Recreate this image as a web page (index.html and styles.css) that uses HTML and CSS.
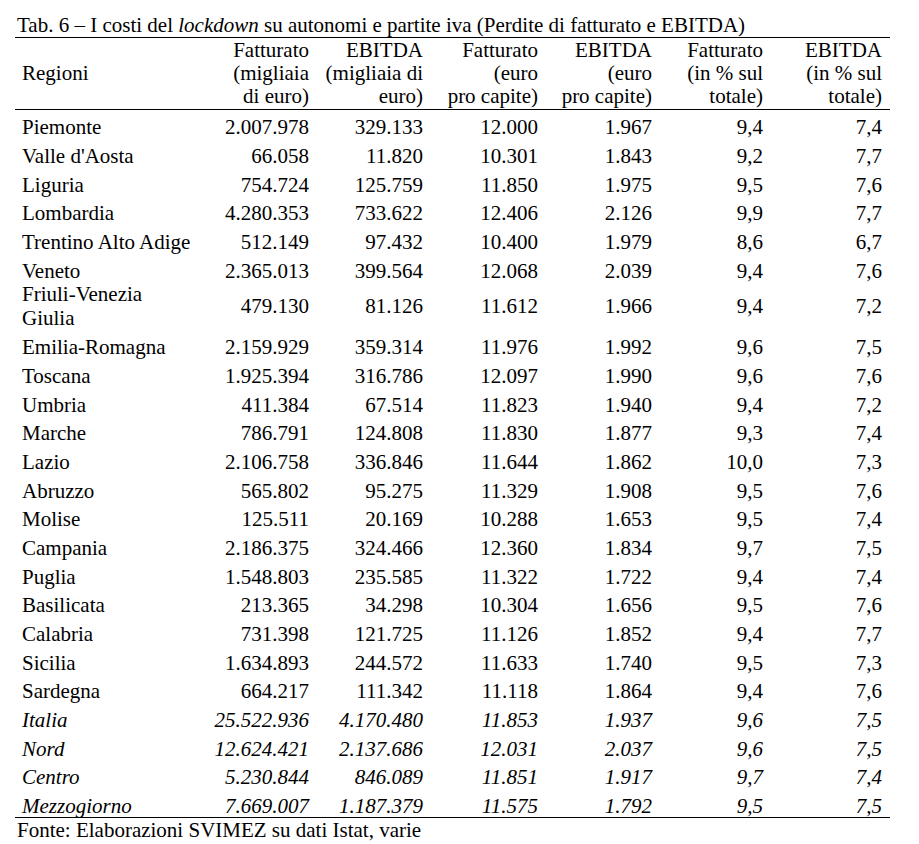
FILE: index.html
```html
<!DOCTYPE html>
<html lang="it">
<head>
<meta charset="utf-8">
<title>Tab. 6</title>
<link rel="stylesheet" href="styles.css">
</head>
<body>
<div class="page">
  <p class="caption">Tab. 6 – I costi del <i>lockdown</i> su autonomi e partite iva (Perdite di fatturato e EBITDA)</p>
  <table class="data">
    <colgroup>
      <col class="c-reg"><col class="c1"><col class="c2"><col class="c3"><col class="c4"><col class="c5"><col class="c6">
    </colgroup>
    <thead>
      <tr>
        <th class="reg">Regioni</th>
        <th>Fatturato<br>(migliaia<br>di euro)</th>
        <th>EBITDA<br>(migliaia di<br>euro)</th>
        <th>Fatturato<br>(euro<br>pro capite)</th>
        <th>EBITDA<br>(euro<br>pro capite)</th>
        <th>Fatturato<br>(in % sul<br>totale)</th>
        <th>EBITDA<br>(in % sul<br>totale)</th>
      </tr>
    </thead>
    <tbody>
      <tr><td>Piemonte</td><td>2.007.978</td><td>329.133</td><td>12.000</td><td>1.967</td><td>9,4</td><td>7,4</td></tr>
      <tr><td>Valle d'Aosta</td><td>66.058</td><td>11.820</td><td>10.301</td><td>1.843</td><td>9,2</td><td>7,7</td></tr>
      <tr><td>Liguria</td><td>754.724</td><td>125.759</td><td>11.850</td><td>1.975</td><td>9,5</td><td>7,6</td></tr>
      <tr><td>Lombardia</td><td>4.280.353</td><td>733.622</td><td>12.406</td><td>2.126</td><td>9,9</td><td>7,7</td></tr>
      <tr><td>Trentino Alto Adige</td><td>512.149</td><td>97.432</td><td>10.400</td><td>1.979</td><td>8,6</td><td>6,7</td></tr>
      <tr><td>Veneto</td><td>2.365.013</td><td>399.564</td><td>12.068</td><td>2.039</td><td>9,4</td><td>7,6</td></tr>
      <tr class="two"><td>Friuli-Venezia<br>Giulia</td><td>479.130</td><td>81.126</td><td>11.612</td><td>1.966</td><td>9,4</td><td>7,2</td></tr>
      <tr><td>Emilia-Romagna</td><td>2.159.929</td><td>359.314</td><td>11.976</td><td>1.992</td><td>9,6</td><td>7,5</td></tr>
      <tr><td>Toscana</td><td>1.925.394</td><td>316.786</td><td>12.097</td><td>1.990</td><td>9,6</td><td>7,6</td></tr>
      <tr><td>Umbria</td><td>411.384</td><td>67.514</td><td>11.823</td><td>1.940</td><td>9,4</td><td>7,2</td></tr>
      <tr><td>Marche</td><td>786.791</td><td>124.808</td><td>11.830</td><td>1.877</td><td>9,3</td><td>7,4</td></tr>
      <tr><td>Lazio</td><td>2.106.758</td><td>336.846</td><td>11.644</td><td>1.862</td><td>10,0</td><td>7,3</td></tr>
      <tr><td>Abruzzo</td><td>565.802</td><td>95.275</td><td>11.329</td><td>1.908</td><td>9,5</td><td>7,6</td></tr>
      <tr><td>Molise</td><td>125.511</td><td>20.169</td><td>10.288</td><td>1.653</td><td>9,5</td><td>7,4</td></tr>
      <tr><td>Campania</td><td>2.186.375</td><td>324.466</td><td>12.360</td><td>1.834</td><td>9,7</td><td>7,5</td></tr>
      <tr><td>Puglia</td><td>1.548.803</td><td>235.585</td><td>11.322</td><td>1.722</td><td>9,4</td><td>7,4</td></tr>
      <tr><td>Basilicata</td><td>213.365</td><td>34.298</td><td>10.304</td><td>1.656</td><td>9,5</td><td>7,6</td></tr>
      <tr><td>Calabria</td><td>731.398</td><td>121.725</td><td>11.126</td><td>1.852</td><td>9,4</td><td>7,7</td></tr>
      <tr><td>Sicilia</td><td>1.634.893</td><td>244.572</td><td>11.633</td><td>1.740</td><td>9,5</td><td>7,3</td></tr>
      <tr><td>Sardegna</td><td>664.217</td><td>111.342</td><td>11.118</td><td>1.864</td><td>9,4</td><td>7,6</td></tr>
      <tr class="tot"><td>Italia</td><td>25.522.936</td><td>4.170.480</td><td>11.853</td><td>1.937</td><td>9,6</td><td>7,5</td></tr>
      <tr class="tot"><td>Nord</td><td>12.624.421</td><td>2.137.686</td><td>12.031</td><td>2.037</td><td>9,6</td><td>7,5</td></tr>
      <tr class="tot"><td>Centro</td><td>5.230.844</td><td>846.089</td><td>11.851</td><td>1.917</td><td>9,7</td><td>7,4</td></tr>
      <tr class="tot last"><td>Mezzogiorno</td><td>7.669.007</td><td>1.187.379</td><td>11.575</td><td>1.792</td><td>9,5</td><td>7,5</td></tr>
    </tbody>
  </table>
  <p class="source">Fonte: Elaborazioni SVIMEZ su dati Istat, varie</p>
</div>
</body>
</html>
```

FILE: styles.css
```css
html, body {
  margin: 0;
  padding: 0;
  background: #ffffff;
}

body {
  font-family: "Liberation Serif", "Times New Roman", serif;
  font-size: 21px;
  color: #000;
}

.page {
  padding: 13px 0 0 15px;
}

.caption {
  margin: 0;
  padding-left: 2px;
  line-height: 24px;
  height: 24px;
  white-space: nowrap;
}

.data {
  border-collapse: collapse;
  table-layout: fixed;
  width: 875px;
  border-top: 1.5px solid #000;
  border-bottom: 1.5px solid #000;
}

.c-reg { width: 193px; }
.c1 { width: 109px; }
.c2 { width: 114px; }
.c3 { width: 115px; }
.c4 { width: 114px; }
.c5 { width: 111px; }
.c6 { width: 119px; }

.data th {
  font-weight: normal;
  text-align: right;
  line-height: 23.4px;
  padding: 0.5px 8px 0.5px 0;
  vertical-align: middle;
  white-space: nowrap;
  border-bottom: 1.5px solid #000;
}

.data th.reg {
  text-align: left;
  padding-left: 7px;
}

.data td {
  text-align: right;
  line-height: 22px;
  height: 22px;
  padding: 6.17px 8px 0.5px 0;
  white-space: nowrap;
  vertical-align: middle;
}

.data td:first-child {
  text-align: left;
  padding-left: 7px;
}

.data tr.two td {
  line-height: 24px;
  height: 48px;
  padding-top: 0;
  padding-bottom: 0;
}

.data tr.tot td {
  font-style: italic;
}

.data tr.last td {
  padding-top: 6.17px;
  padding-bottom: 0.5px;
}

.source {
  margin: 0;
  padding: 2px 0 0 2px;
  line-height: 21px;
}
```
